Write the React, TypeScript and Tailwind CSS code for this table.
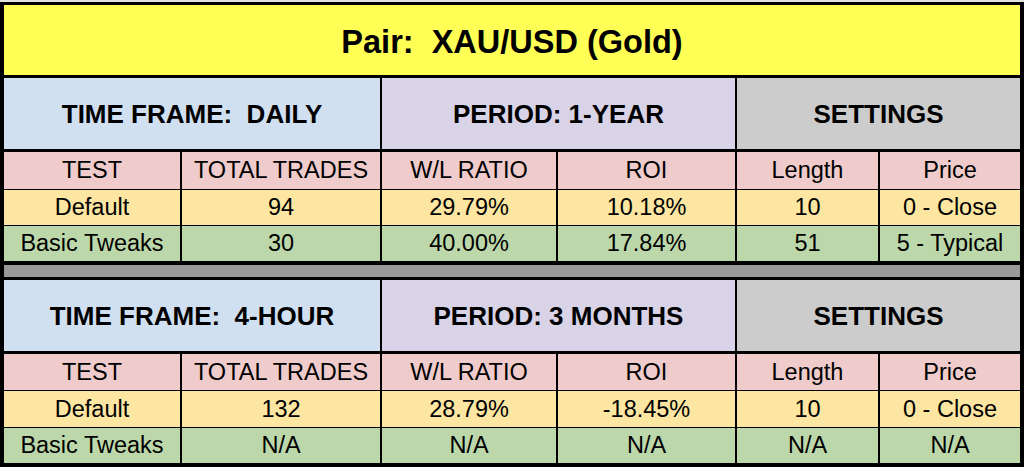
import React from 'react'

type Row = { cells: string[]; bg: string; h: string }

interface Section {
  frame: string
  period: string
  rows: Row[]
  headerH: string
}

const cols = 'grid grid-cols-[176px_198px_174px_177px_141px_140px] gap-x-[2px]'

const sections: Section[] = [
  {
    frame: 'TIME FRAME:  DAILY',
    period: 'PERIOD: 1-YEAR',
    headerH: 'h-[71px]',
    rows: [
      { cells: ['TEST', 'TOTAL TRADES', 'W/L RATIO', 'ROI', 'Length', 'Price'], bg: 'bg-[#efcbcb]', h: 'h-[37px]' },
      { cells: ['Default', '94', '29.79%', '10.18%', '10', '0 - Close'], bg: 'bg-[#fce6a1]', h: 'h-[35px]' },
      { cells: ['Basic Tweaks', '30', '40.00%', '17.84%', '51', '5 - Typical'], bg: 'bg-[#bcd8ab]', h: 'h-[35px]' },
    ],
  },
  {
    frame: 'TIME FRAME:  4-HOUR',
    period: 'PERIOD: 3 MONTHS',
    headerH: 'h-[71px]',
    rows: [
      { cells: ['TEST', 'TOTAL TRADES', 'W/L RATIO', 'ROI', 'Length', 'Price'], bg: 'bg-[#efcbcb]', h: 'h-[36px]' },
      { cells: ['Default', '132', '28.79%', '-18.45%', '10', '0 - Close'], bg: 'bg-[#fce6a1]', h: 'h-[36px]' },
      { cells: ['Basic Tweaks', 'N/A', 'N/A', 'N/A', 'N/A', 'N/A'], bg: 'bg-[#bcd8ab]', h: 'h-[35px]' },
    ],
  },
]

// one time-frame block: coloured header band + three data rows
const Block = ({ s }: { s: Section }) => (
  <div className="flex flex-col">
    <div className={`${cols} ${s.headerH} text-[26px] font-bold`}>
      <div className="col-span-2 flex items-center justify-center whitespace-pre bg-[#d1e0f1]">{s.frame}</div>
      <div className="col-span-2 flex items-center justify-center whitespace-pre bg-[#d9d3e7]">{s.period}</div>
      <div className="col-span-2 flex items-center justify-center bg-[#cccccc]">SETTINGS</div>
    </div>
    {s.rows.map((r, i) => (
      <div key={i} className={`${cols} ${r.h} ${i === 0 ? 'mt-[3px]' : 'mt-[1px]'} text-[23.5px]`}>
        {r.cells.map((c, j) => (
          <div key={j} className={`flex items-center justify-center pt-[1px] ${r.bg}`}>
            {c}
          </div>
        ))}
      </div>
    ))}
  </div>
)

export default function App() {
  return (
    <div className="flex h-[467px] w-[1024px] flex-col bg-black font-['Liberation_Sans',Arial,sans-serif] leading-none text-black">
      <div className="h-[2px] bg-[#e2e2e2]" />
      <div className="flex flex-col px-[4px] pt-[3px]">
        <div className="flex h-[70px] items-center justify-center whitespace-pre bg-[#ffff55] pt-[4px] text-[32.5px] font-bold">
          Pair:  XAU/USD (Gold)
        </div>
        <div className="mt-[3px]">
          <Block s={sections[0]} />
        </div>
        <div className="mt-[4px] h-[12px] bg-[#999999]" />
        <div className="mt-[3px]">
          <Block s={sections[1]} />
        </div>
      </div>
    </div>
  )
}
